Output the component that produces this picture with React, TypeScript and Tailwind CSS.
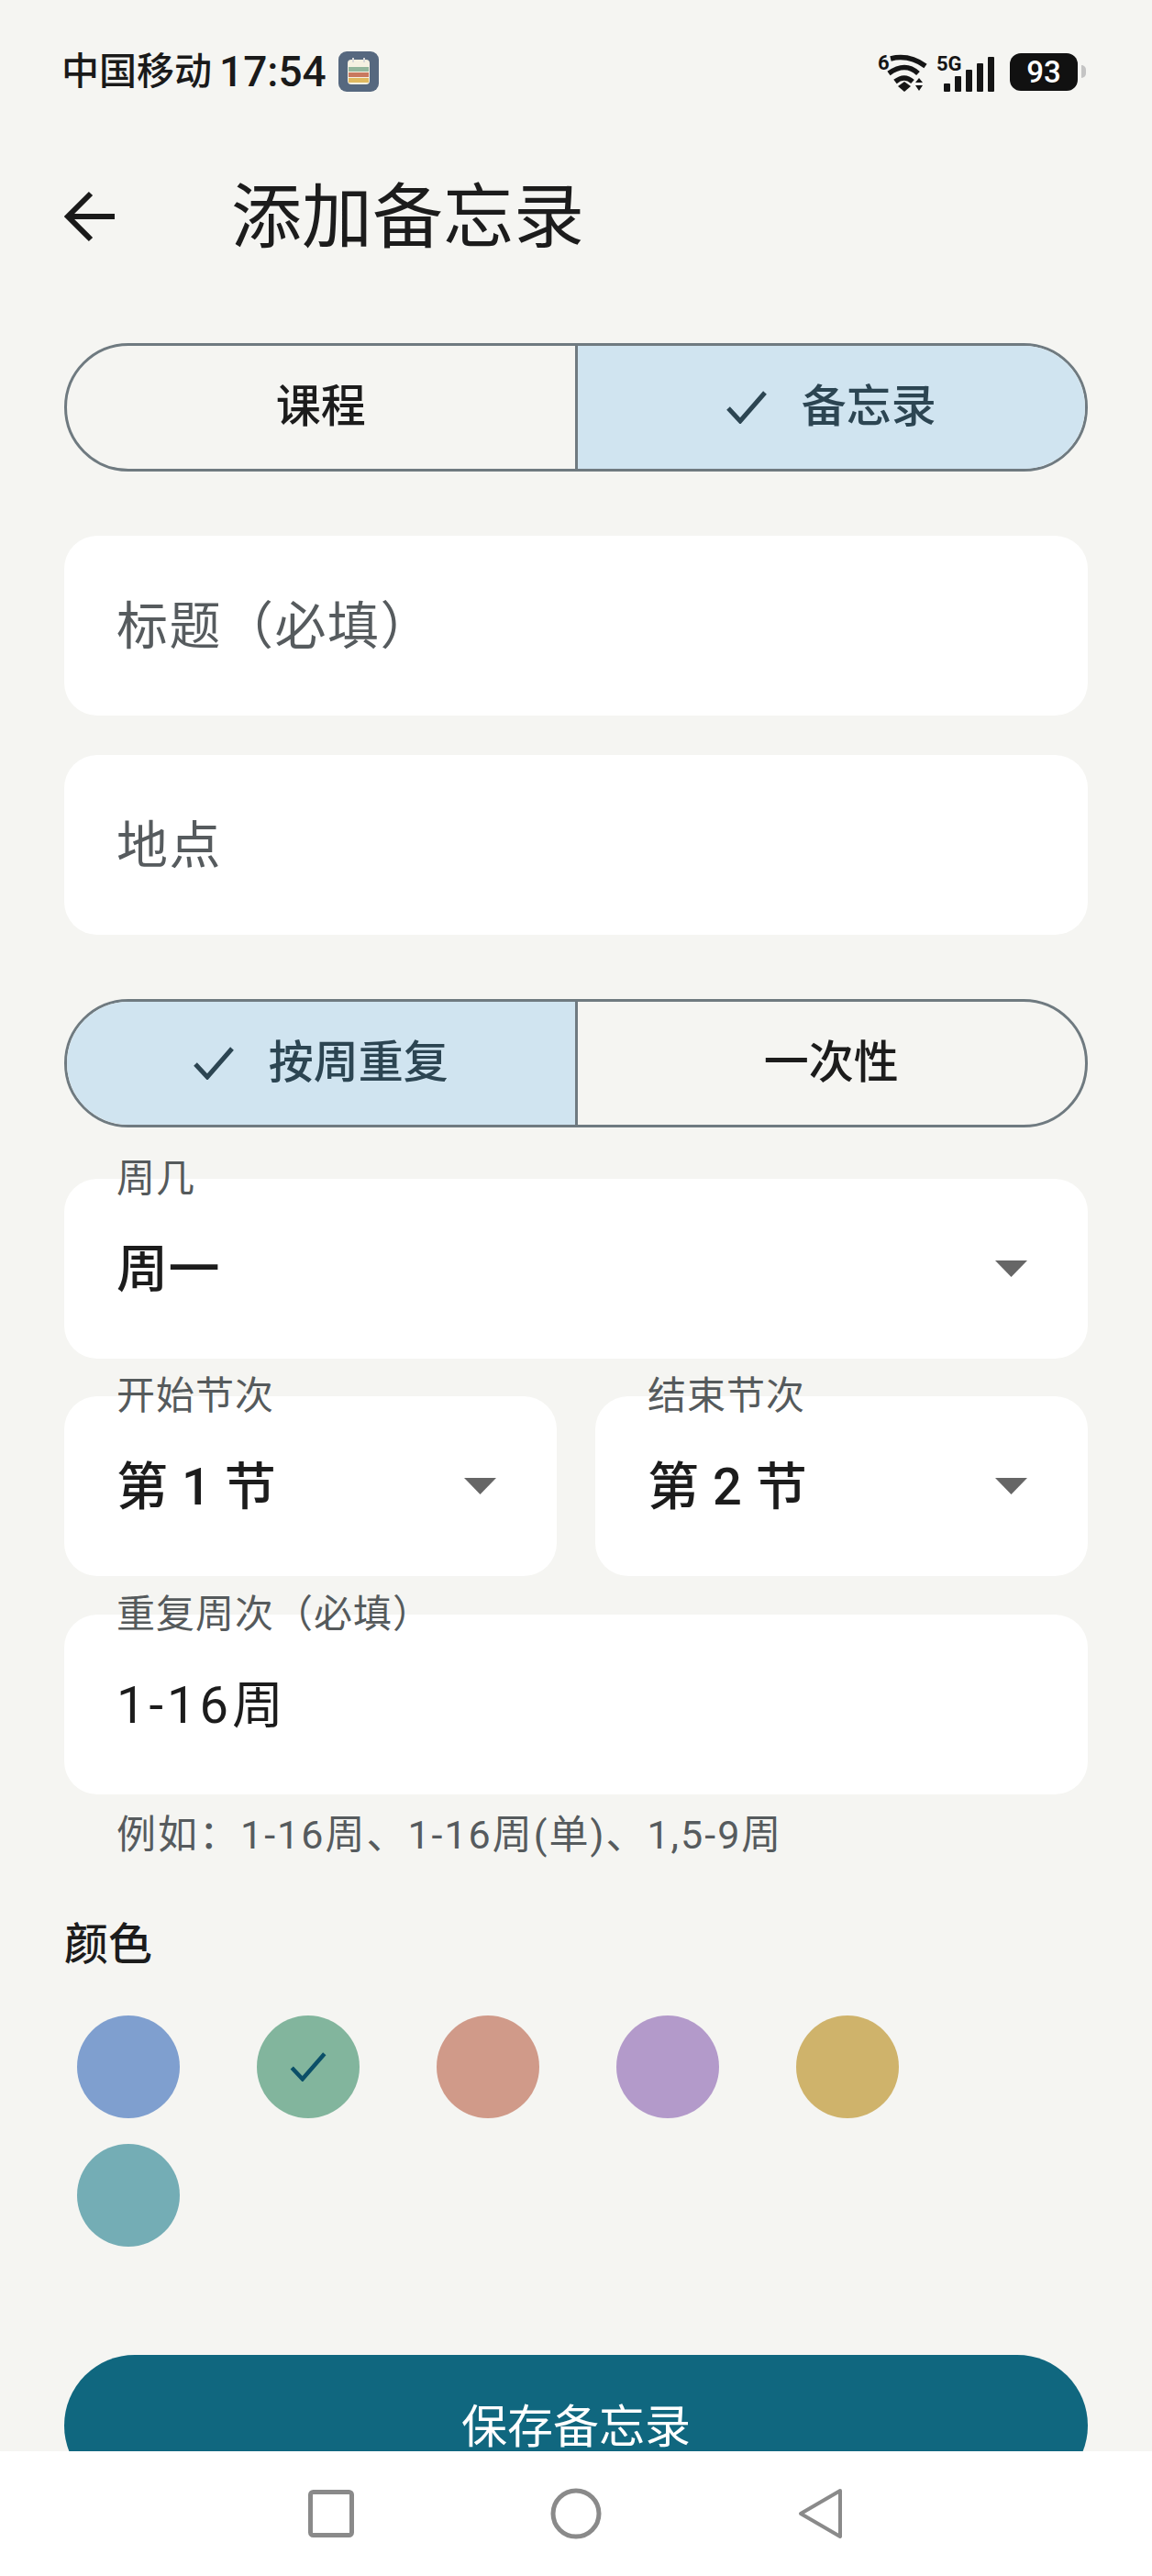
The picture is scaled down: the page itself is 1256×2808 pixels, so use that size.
import React from "react";

const font = "font-['Roboto','Noto_Sans_CJK_SC',sans-serif]";

const Check = ({className}: {className: string}) => (
    <svg className={className} viewBox="0 0 44 36" fill="none" stroke="currentColor" strokeWidth={5}>
        <path d="M2 19l13 14L42 2"/>
    </svg>
);

const Caret = () => (
    <svg className="w-[35px] h-[18px] shrink-0" viewBox="0 0 35 18" fill="#666666">
        <path d="M0 0h35L17.500 18z"/>
    </svg>
);

function Segmented({items, active}: {items: string[]; active: number}) {
    return (
        <div className="flex h-[140px] rounded-[70px] border-[3px] border-[#6f7a80] overflow-hidden">
            {items.map((item, i) => (
                <div
                    key={item}
                    className={`flex-1 flex items-center justify-center gap-[38px] text-[49px] font-medium ${i === 1 ? "border-l-[3px] border-[#6f7a80]" : ""} ${i === active ? "bg-[#d0e4f0] text-[#2c4552]" : "text-[#1c1c1c]"}`}
                >
                    {i === active && <Check className="w-[44px] h-[36px]"/>}
                    <span>{item}</span>
                </div>
            ))}
        </div>
    );
}

function Field({label, value, caret, plain, className = ""}: {label?: string; value: string; caret?: boolean; plain?: boolean; className?: string}) {
    const valueStyle = !label
        ? "text-[#565b5e] tracking-[1.500px]"
        : plain
            ? "text-[#1c1c1c] tracking-[4px]"
            : "text-[#1c1c1c] font-medium tracking-[0.500px]";
    return (
        <div className={`relative h-[196px] bg-white rounded-[36px] pl-[57px] pr-[66px] flex items-center justify-between ${className}`}>
            {label && (
                <span className="absolute left-[57px] top-0 -translate-y-1/2 text-[42px] leading-none tracking-[1px] text-[#555a5c] whitespace-nowrap">
                    {label}
                </span>
            )}
            <span className={`text-[56px] leading-none pt-[2px] ${valueStyle}`}>
                {value}
            </span>
            {caret && <Caret/>}
        </div>
    );
}

const colors = ["bg-[#7f9fcf]", "bg-[#82b59d]", "bg-[#d09a89]", "bg-[#b39aca]", "bg-[#cfb36b]", "bg-[#74adb5]"];

export default function App() {
    return (
        <div className={`relative w-[1256px] h-[2808px] overflow-hidden bg-[#f5f5f2] ${font}`}>

            {/* status bar */}
            <div className="h-[156px] pl-[67px] pr-[70px] flex items-center justify-between">
                <div className="flex items-center text-[#1a1a1a] font-medium">
                    <span className="text-[41px] leading-none">中国移动</span>
                    <span className="ml-[8px] text-[46px] leading-none">17:54</span>
                    <svg className="ml-[13px] w-[44px] h-[44px]" viewBox="0 0 44 44">
                        <rect width="44" height="44" rx="9" fill="#56687f"/>
                        <rect x="10" y="9" width="24" height="27" rx="4" fill="#f6f1e2"/>
                        <rect x="11" y="17" width="22" height="5" fill="#93b69c"/>
                        <rect x="11" y="23" width="22" height="5" fill="#c9795f"/>
                        <rect x="11" y="29" width="22" height="5" fill="#e0b95f"/>
                        <path d="M16 7v5M28 7v5" stroke="#d8d8d8" strokeWidth={2}/>
                    </svg>
                </div>
                <div className="flex items-center mr-[2px]">
                    <svg className="w-[128px] h-[50px]" viewBox="0 -6 128 50">
                        <text x="0" y="17" fontSize="22" fontWeight="700" fill="#151515">6</text>
                        <g fill="none" stroke="#151515" strokeWidth={5.500}>
                            <path d="M14 5q20-5 38 8"/>
                            <path d="M12 21q18-13 32 0"/>
                            <path d="M19 30q10-8 19 0"/>
                        </g>
                        <path d="M22 35l7-5 7 5-7 6z" fill="#151515"/>
                        <path d="M41 31l4-5 4 5zM41 34l4 6 4-6z" fill="#151515"/>
                        <text x="64" y="18" fontSize="22" fontWeight="700" fill="#151515">5G</text>
                        <g fill="#151515">
                            <rect x="72" y="32" width="7" height="9" rx="1"/>
                            <rect x="84" y="24" width="7" height="17" rx="1"/>
                            <rect x="96" y="17" width="7" height="24" rx="1"/>
                            <rect x="108" y="10" width="7" height="31" rx="1"/>
                            <rect x="120" y="3" width="7" height="38" rx="1"/>
                        </g>
                    </svg>
                    <div className="ml-[16px] w-[74px] h-[41px] rounded-[12px] bg-[#111111] text-white text-[33px] font-medium leading-none flex items-center justify-center">
                        93
                    </div>
                    <div className="ml-[4px] w-[5px] h-[14px] rounded-r-full bg-[#c4c4c4]"/>
                </div>
            </div>

            {/* top bar */}
            <div className="h-[160px] px-[70px] flex items-center">
                <svg className="w-[56px] h-[56px] shrink-0" viewBox="0 0 56 56" fill="none" stroke="#1a1a1a" strokeWidth={6}>
                    <path d="M55 28H5M29 3L4 28l25 25"/>
                </svg>
                <h1 className="ml-[126px] text-[77px] leading-none pt-[5px] text-[#1c1c1c]">添加备忘录</h1>
            </div>

            <main className="px-[70px] pt-[58px]">
                <Segmented items={["课程", "备忘录"]} active={1}/>

                <Field value="标题（必填）" className="mt-[70px]"/>
                <Field value="地点" className="mt-[43px]"/>

                <div className="mt-[70px]">
                    <Segmented items={["按周重复", "一次性"]} active={0}/>
                </div>

                <Field label="周几" value="周一" caret className="mt-[56px]"/>

                <div className="mt-[41px] grid grid-cols-2 gap-[42px]">
                    <Field label="开始节次" value="第 1 节" caret/>
                    <Field label="结束节次" value="第 2 节" caret/>
                </div>

                <Field label="重复周次（必填）" value="1-16周" plain className="mt-[42px]"/>

                <p className="mt-[14px] pl-[57px] h-[60px] flex items-center text-[43px] tracking-[2px] text-[#565b5e] whitespace-nowrap">
                    例如：1-16周、1-16周(单)、1,5-9周
                </p>

                <h2 className="mt-[55px] h-[70px] flex items-center text-[48px] font-medium text-[#1c1c1c]">颜色</h2>

                <div className="mt-[42px] px-[14px] flex flex-wrap gap-x-[84px] gap-y-[28px]">
                    {colors.map((c, i) => (
                        <div key={c} className={`w-[112px] h-[112px] rounded-full flex items-center justify-center ${c}`}>
                            {i === 1 && <Check className="w-[40px] h-[32px] text-[#0b4f68]"/>}
                        </div>
                    ))}
                </div>

                <button className="mt-[118px] w-full h-[154px] rounded-[77px] bg-[#10677f] text-white text-[50px] pt-[4px] flex items-center justify-center">
                    保存备忘录
                </button>
            </main>

            {/* system nav bar, lies over the page */}
            <div className="absolute left-0 right-0 bottom-0 h-[136px] bg-white flex items-center justify-center gap-[214px]">
                <svg className="w-[50px] h-[52px]" viewBox="0 0 50 52" fill="none" stroke="#8a8a8a" strokeWidth={5}>
                    <rect x="2.500" y="2.500" width="45" height="47" rx="3"/>
                </svg>
                <svg className="w-[56px] h-[56px]" viewBox="0 0 56 56" fill="none" stroke="#8a8a8a" strokeWidth={5}>
                    <circle cx="28" cy="28" r="25"/>
                </svg>
                <svg className="w-[50px] h-[56px]" viewBox="0 0 50 56" fill="none" stroke="#8a8a8a" strokeWidth={4} strokeLinejoin="round">
                    <path d="M46 3L3 28l43 25z"/>
                </svg>
            </div>
        </div>
    );
}
